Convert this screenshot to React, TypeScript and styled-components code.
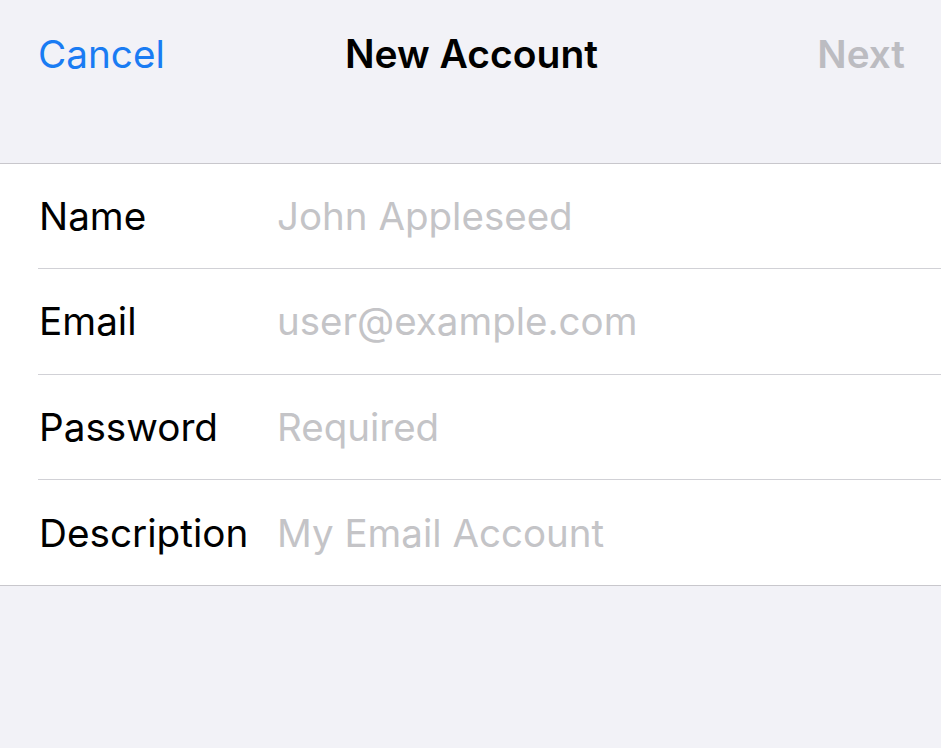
import React from "react";
import styled, { createGlobalStyle } from "styled-components";

const Global = createGlobalStyle`
  html, body { margin: 0; padding: 0; background: #f2f2f7; }
  body { font-family: Inter, "Noto Sans", "Liberation Sans", sans-serif; -webkit-font-smoothing: antialiased; }
`;

const Page = styled.div`
  width: 941px;
  height: 748px;
  background: #f2f2f7;
  overflow: hidden;
`;

const Header = styled.header`
  height: 164px;
  box-sizing: border-box;
  border-bottom: 1px solid #c8c7cc;
`;

const NavBar = styled.nav`
  height: 107px;
  display: grid;
  grid-template-columns: 1fr auto 1fr;
  align-items: center;
  padding: 0 36px 0 38px;
`;

const NavButton = styled.span<{ $disabled?: boolean; $align?: string }>`
  font-size: 38.7px;
  color: ${(p) => (p.$disabled ? "#bcbcc1" : "#1a7cf3")};
  font-weight: ${(p) => (p.$disabled ? 600 : 400)};
  justify-self: ${(p) => p.$align || "start"};
`;

const Title = styled.h1`
  margin: 0;
  font-size: 39px;
  font-weight: 600;
  color: #000;
`;

const Form = styled.section`
  background: #fff;
  border-bottom: 1px solid #c8c7cc;
`;

const Row = styled.div<{ $last?: boolean }>`
  display: flex;
  align-items: center;
  margin-left: 38px;
  height: 105.3px;
  box-sizing: border-box;
  border-bottom: ${(p) => (p.$last ? "none" : "1px solid #d1d1d6")};
`;

const Label = styled.span`
  width: 238px;
  padding-left: 1px;
  flex-shrink: 0;
  font-size: 38.7px;
  color: #000;
`;

const Placeholder = styled.span`
  font-size: 38.5px;
  color: #c4c4c7;
`;

const fields = [
  ["Name", "John Appleseed"],
  ["Email", "user@example.com"],
  ["Password", "Required"],
  ["Description", "My Email Account"],
];

export default function App() {
  return (
    <Page>
      <Global />
      <Header>
        <NavBar>
          <NavButton>Cancel</NavButton>
          <Title>New Account</Title>
          <NavButton $disabled $align="end">Next</NavButton>
        </NavBar>
      </Header>
      <Form>
        {fields.map(([l, p], i) => (
          <Row key={l} $last={i === fields.length - 1}>
            <Label>{l}</Label>
            <Placeholder>{p}</Placeholder>
          </Row>
        ))}
      </Form>
    </Page>
  );
}
